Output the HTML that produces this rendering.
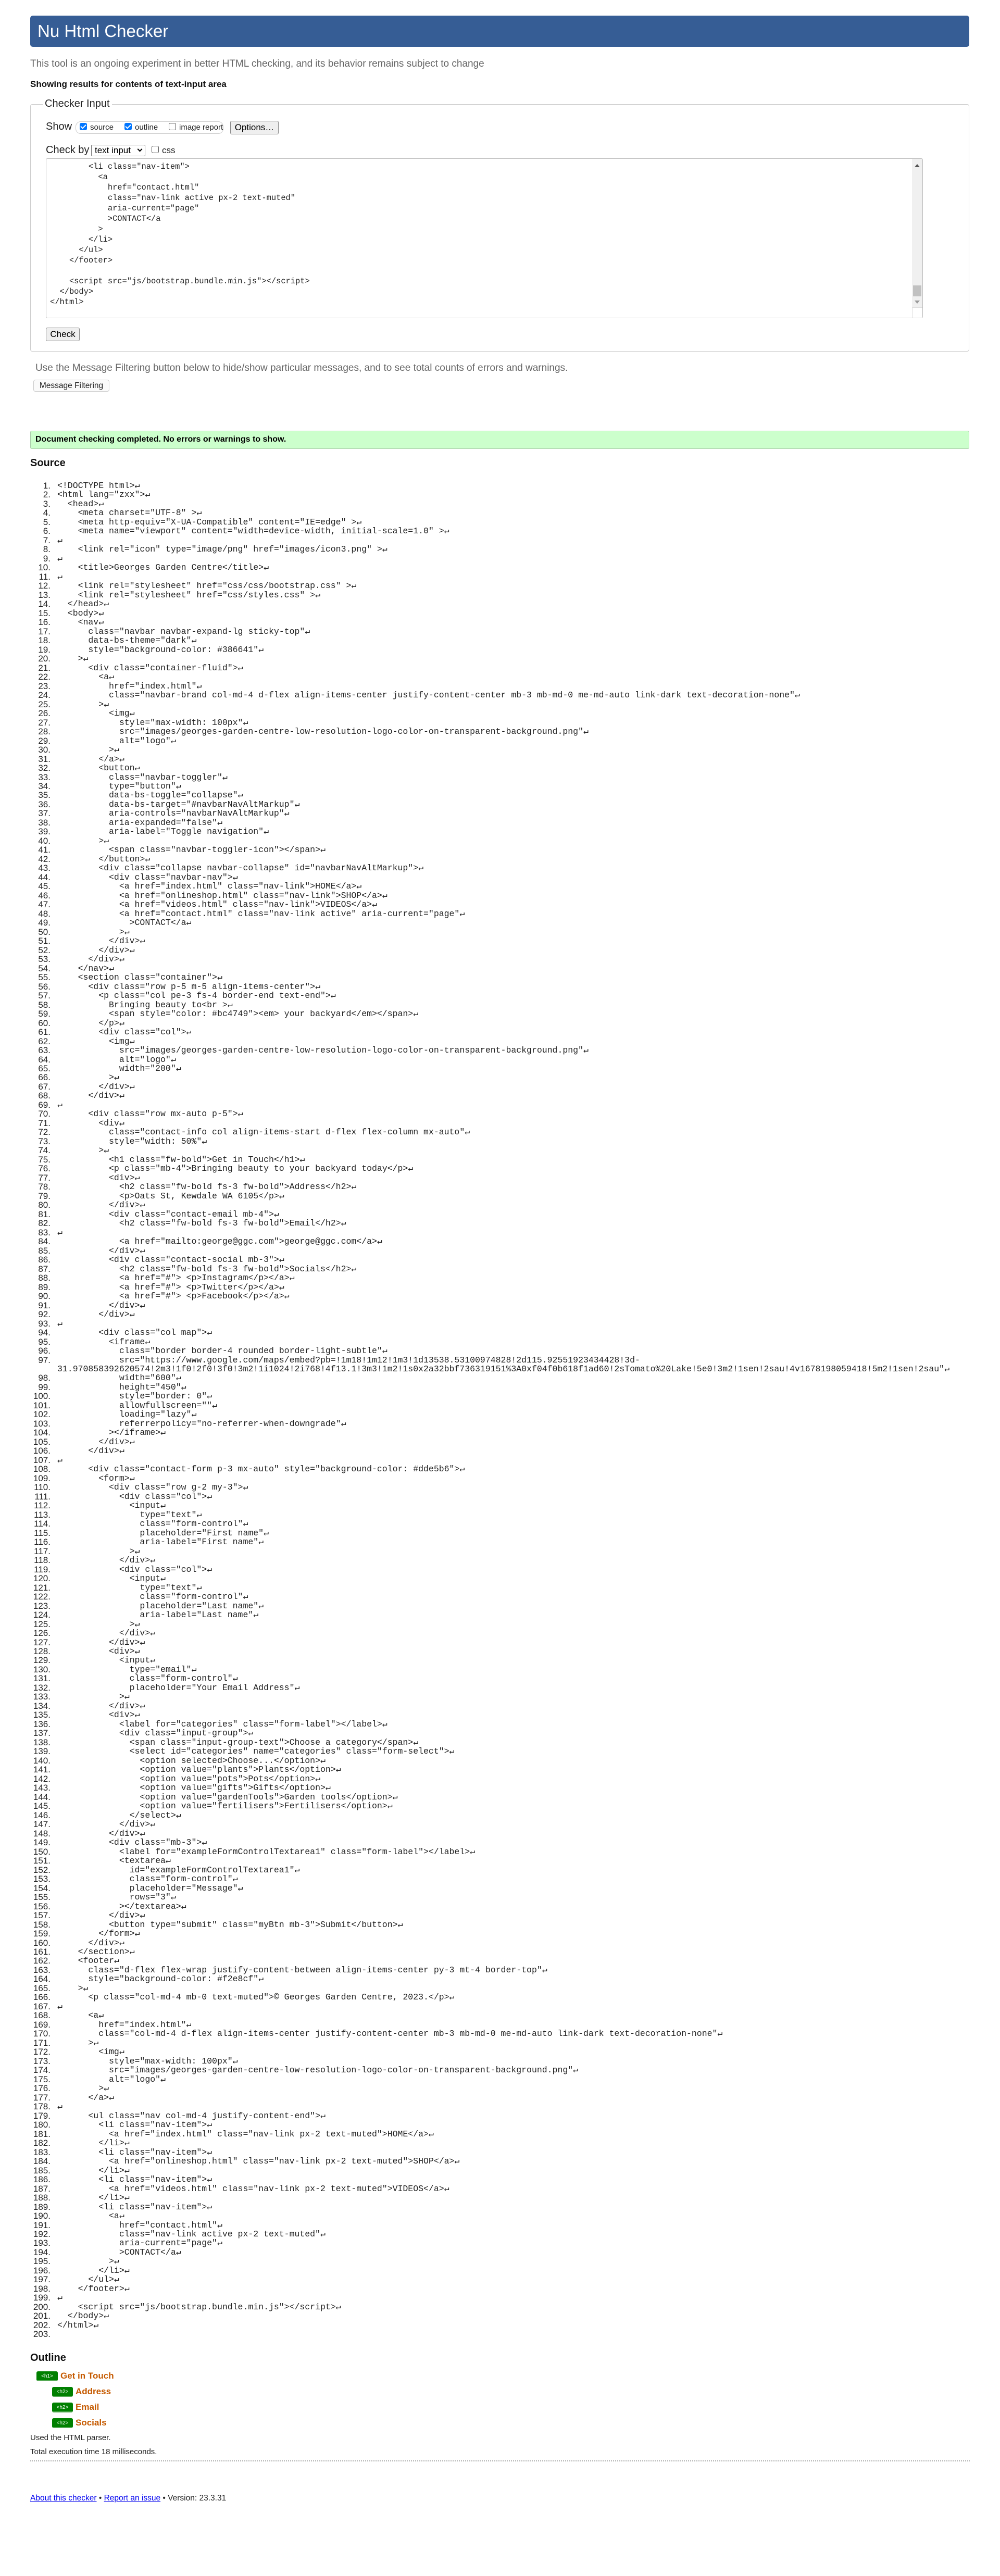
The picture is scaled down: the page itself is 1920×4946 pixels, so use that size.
<!DOCTYPE html>
<html><head><meta charset="utf-8"><title>Nu Html Checker</title>
<style>
*{box-sizing:border-box;margin:0;padding:0}
html,body{width:1920px;height:4946px;background:#fff;overflow:hidden}
body{position:relative;font-family:"Liberation Sans",Arial,sans-serif;color:#222}
.a{position:absolute;white-space:nowrap}
.hdr{left:58px;top:30px;width:1803px;height:60px;background:#365d95;border-radius:5px}
.hdr span{position:absolute;left:14px;top:10px;font-size:33px;color:#fff;line-height:40px}
.cb{position:absolute;width:14px;height:14px;border-radius:3px}
.cb.on{background:#0075ff}
.cb.on::after{content:"";position:absolute;left:4px;top:1px;width:4px;height:8px;border:solid #fff;border-width:0 2px 2px 0;transform:rotate(45deg)}
.cb.off{border:1px solid #555;background:#fff}
.btn{position:absolute;background:#efefef;border:1px solid #8a8a8a;border-radius:3px;font-size:17px;text-align:center;color:#000}
ol{position:absolute;left:0;top:924px;list-style:none;counter-reset:n;width:1900px}
ol li{position:relative;margin-left:110px;height:auto;font-family:"Liberation Mono","DejaVu Sans Mono",monospace;font-size:16.5px;line-height:17.48px;white-space:pre;color:#222;counter-increment:n}
ol li::before{content:counter(n) ".";position:absolute;right:100%;margin-right:13px;font-family:"Liberation Sans",Arial,sans-serif;font-size:17px;color:#222}
.ta{left:88px;top:304px;width:1684px;height:307px;border:1px solid #bbb;border-radius:3px;overflow:hidden}
.ta pre{position:absolute;left:7px;top:5px;font-family:"Liberation Mono","DejaVu Sans Mono",monospace;font-size:15.4px;line-height:20px;color:#222}
.badge{position:absolute;height:19px;background:#008000;color:#fff;font-size:10px;line-height:19px;text-align:center;border-radius:3px;border-bottom:2px solid #5a5}
.ol{position:absolute;font-size:17px;font-weight:bold;color:#c55a00;white-space:nowrap}
</style></head><body>
<div class="a hdr"><span>Nu Html Checker</span></div>
<div class="a" style="left:58px;top:111px;font-size:19px;line-height:24px;color:#666">This tool is an ongoing experiment in better HTML checking, and its behavior remains subject to change</div>
<div class="a" style="left:58px;top:151px;font-size:17px;line-height:22px;font-weight:bold;color:#111">Showing results for contents of text-input area</div>

<div class="a" style="left:58px;top:200px;width:1803px;height:475px;border:1px solid #ccc;border-radius:4px"></div>
<div class="a" style="left:82px;top:187px;font-size:20px;line-height:24px;background:#fff;padding:0 4px;color:#222">Checker Input</div>
<div class="a" style="left:88px;top:231px;font-size:20px;line-height:24px">Show</div>
<div class="a" style="left:145px;top:233px;width:284px;height:24px;border:1px solid #ccc;border-radius:10px"></div>
<div class="cb on" style="left:153px;top:236px"></div>
<div class="a" style="left:173px;top:236px;font-size:15px;line-height:18px">source</div>
<div class="cb on" style="left:239px;top:236px"></div>
<div class="a" style="left:259px;top:236px;font-size:15px;line-height:18px">outline</div>
<div class="cb off" style="left:324px;top:236px"></div>
<div class="a" style="left:344px;top:236px;font-size:15px;line-height:18px">image report</div>
<div class="btn" style="left:442px;top:232px;width:93px;height:26px;line-height:23px">Options…</div>
<div class="a" style="left:88px;top:276px;font-size:20px;line-height:24px">Check by</div>
<div class="a" style="left:175px;top:278px;width:104px;height:22px;border:1px solid #767676;border-radius:2px;font-size:17px;line-height:20px;padding-left:6px;color:#000">text input<span style="position:absolute;right:6px;top:4px;width:7px;height:7px;border:solid #000;border-width:0 2px 2px 0;transform:rotate(45deg)"></span></div>
<div class="cb off" style="left:291px;top:280px"></div>
<div class="a" style="left:311px;top:278px;font-size:17px;line-height:22px">css</div>
<div class="a ta"><pre>        &lt;li class="nav-item"&gt;
          &lt;a
            href="contact.html"
            class="nav-link active px-2 text-muted"
            aria-current="page"
            &gt;CONTACT&lt;/a
          &gt;
        &lt;/li&gt;
      &lt;/ul&gt;
    &lt;/footer&gt;

    &lt;script src="js/bootstrap.bundle.min.js"&gt;&lt;/script&gt;
  &lt;/body&gt;
&lt;/html&gt;</pre>
<div style="position:absolute;right:0;top:0;width:20px;height:100%;background:#f0f0f0"></div>
<div style="position:absolute;right:5px;top:10px;width:0;height:0;border:5px solid transparent;border-bottom:6px solid #555;border-top:0"></div>
<div style="position:absolute;right:2px;top:243px;width:16px;height:21px;background:#c1c1c1"></div>
<div style="position:absolute;right:5px;top:272px;width:0;height:0;border:5px solid transparent;border-top:6px solid #999;border-bottom:0"></div>
<div style="position:absolute;right:0;bottom:0;width:20px;height:20px;background:#fff;border-left:1px solid #ddd;border-top:1px solid #ddd"></div>
</div>
<div class="btn" style="left:88px;top:629px;width:65px;height:26px;line-height:23px">Check</div>

<div class="a" style="left:68px;top:695px;font-size:19px;line-height:24px;color:#666">Use the Message Filtering button below to hide/show particular messages, and to see total counts of errors and warnings.</div>
<div class="a" style="left:64px;top:729px;width:146px;height:23px;border:1px solid #ccc;border-radius:4px;font-size:15.5px;line-height:21px;text-align:center;background:#fafafa">Message Filtering</div>

<div class="a" style="left:58px;top:827px;width:1803px;height:35px;background:#ccffcc;border:1px solid #aaccaa;border-radius:3px"></div>
<div class="a" style="left:68px;top:834px;font-size:16px;line-height:20px;font-weight:bold;color:#000">Document checking completed. No errors or warnings to show.</div>
<div class="a" style="left:58px;top:877px;font-size:20px;line-height:24px;font-weight:bold;color:#111">Source</div>

<ol>
<li>&lt;!DOCTYPE html&gt;↵</li>
<li>&lt;html lang="zxx"&gt;↵</li>
<li>  &lt;head&gt;↵</li>
<li>    &lt;meta charset="UTF-8" &gt;↵</li>
<li>    &lt;meta http-equiv="X-UA-Compatible" content="IE=edge" &gt;↵</li>
<li>    &lt;meta name="viewport" content="width=device-width, initial-scale=1.0" &gt;↵</li>
<li>↵</li>
<li>    &lt;link rel="icon" type="image/png" href="images/icon3.png" &gt;↵</li>
<li>↵</li>
<li>    &lt;title&gt;Georges Garden Centre&lt;/title&gt;↵</li>
<li>↵</li>
<li>    &lt;link rel="stylesheet" href="css/css/bootstrap.css" &gt;↵</li>
<li>    &lt;link rel="stylesheet" href="css/styles.css" &gt;↵</li>
<li>  &lt;/head&gt;↵</li>
<li>  &lt;body&gt;↵</li>
<li>    &lt;nav↵</li>
<li>      class="navbar navbar-expand-lg sticky-top"↵</li>
<li>      data-bs-theme="dark"↵</li>
<li>      style="background-color: #386641"↵</li>
<li>    &gt;↵</li>
<li>      &lt;div class="container-fluid"&gt;↵</li>
<li>        &lt;a↵</li>
<li>          href="index.html"↵</li>
<li>          class="navbar-brand col-md-4 d-flex align-items-center justify-content-center mb-3 mb-md-0 me-md-auto link-dark text-decoration-none"↵</li>
<li>        &gt;↵</li>
<li>          &lt;img↵</li>
<li>            style="max-width: 100px"↵</li>
<li>            src="images/georges-garden-centre-low-resolution-logo-color-on-transparent-background.png"↵</li>
<li>            alt="logo"↵</li>
<li>          &gt;↵</li>
<li>        &lt;/a&gt;↵</li>
<li>        &lt;button↵</li>
<li>          class="navbar-toggler"↵</li>
<li>          type="button"↵</li>
<li>          data-bs-toggle="collapse"↵</li>
<li>          data-bs-target="#navbarNavAltMarkup"↵</li>
<li>          aria-controls="navbarNavAltMarkup"↵</li>
<li>          aria-expanded="false"↵</li>
<li>          aria-label="Toggle navigation"↵</li>
<li>        &gt;↵</li>
<li>          &lt;span class="navbar-toggler-icon"&gt;&lt;/span&gt;↵</li>
<li>        &lt;/button&gt;↵</li>
<li>        &lt;div class="collapse navbar-collapse" id="navbarNavAltMarkup"&gt;↵</li>
<li>          &lt;div class="navbar-nav"&gt;↵</li>
<li>            &lt;a href="index.html" class="nav-link"&gt;HOME&lt;/a&gt;↵</li>
<li>            &lt;a href="onlineshop.html" class="nav-link"&gt;SHOP&lt;/a&gt;↵</li>
<li>            &lt;a href="videos.html" class="nav-link"&gt;VIDEOS&lt;/a&gt;↵</li>
<li>            &lt;a href="contact.html" class="nav-link active" aria-current="page"↵</li>
<li>              &gt;CONTACT&lt;/a↵</li>
<li>            &gt;↵</li>
<li>          &lt;/div&gt;↵</li>
<li>        &lt;/div&gt;↵</li>
<li>      &lt;/div&gt;↵</li>
<li>    &lt;/nav&gt;↵</li>
<li>    &lt;section class="container"&gt;↵</li>
<li>      &lt;div class="row p-5 m-5 align-items-center"&gt;↵</li>
<li>        &lt;p class="col pe-3 fs-4 border-end text-end"&gt;↵</li>
<li>          Bringing beauty to&lt;br &gt;↵</li>
<li>          &lt;span style="color: #bc4749"&gt;&lt;em&gt; your backyard&lt;/em&gt;&lt;/span&gt;↵</li>
<li>        &lt;/p&gt;↵</li>
<li>        &lt;div class="col"&gt;↵</li>
<li>          &lt;img↵</li>
<li>            src="images/georges-garden-centre-low-resolution-logo-color-on-transparent-background.png"↵</li>
<li>            alt="logo"↵</li>
<li>            width="200"↵</li>
<li>          &gt;↵</li>
<li>        &lt;/div&gt;↵</li>
<li>      &lt;/div&gt;↵</li>
<li>↵</li>
<li>      &lt;div class="row mx-auto p-5"&gt;↵</li>
<li>        &lt;div↵</li>
<li>          class="contact-info col align-items-start d-flex flex-column mx-auto"↵</li>
<li>          style="width: 50%"↵</li>
<li>        &gt;↵</li>
<li>          &lt;h1 class="fw-bold"&gt;Get in Touch&lt;/h1&gt;↵</li>
<li>          &lt;p class="mb-4"&gt;Bringing beauty to your backyard today&lt;/p&gt;↵</li>
<li>          &lt;div&gt;↵</li>
<li>            &lt;h2 class="fw-bold fs-3 fw-bold"&gt;Address&lt;/h2&gt;↵</li>
<li>            &lt;p&gt;Oats St, Kewdale WA 6105&lt;/p&gt;↵</li>
<li>          &lt;/div&gt;↵</li>
<li>          &lt;div class="contact-email mb-4"&gt;↵</li>
<li>            &lt;h2 class="fw-bold fs-3 fw-bold"&gt;Email&lt;/h2&gt;↵</li>
<li>↵</li>
<li>            &lt;a href="mailto:george@ggc.com"&gt;george@ggc.com&lt;/a&gt;↵</li>
<li>          &lt;/div&gt;↵</li>
<li>          &lt;div class="contact-social mb-3"&gt;↵</li>
<li>            &lt;h2 class="fw-bold fs-3 fw-bold"&gt;Socials&lt;/h2&gt;↵</li>
<li>            &lt;a href="#"&gt; &lt;p&gt;Instagram&lt;/p&gt;&lt;/a&gt;↵</li>
<li>            &lt;a href="#"&gt; &lt;p&gt;Twitter&lt;/p&gt;&lt;/a&gt;↵</li>
<li>            &lt;a href="#"&gt; &lt;p&gt;Facebook&lt;/p&gt;&lt;/a&gt;↵</li>
<li>          &lt;/div&gt;↵</li>
<li>        &lt;/div&gt;↵</li>
<li>↵</li>
<li>        &lt;div class="col map"&gt;↵</li>
<li>          &lt;iframe↵</li>
<li>            class="border border-4 rounded border-light-subtle"↵</li>
<li>            src="https://www.google.com/maps/embed?pb=!1m18!1m12!1m3!1d13538.53100974828!2d115.92551923434428!3d-
31.970858392620574!2m3!1f0!2f0!3f0!3m2!1i1024!2i768!4f13.1!3m3!1m2!1s0x2a32bbf736319151%3A0xf04f0b618f1ad60!2sTomato%20Lake!5e0!3m2!1sen!2sau!4v1678198059418!5m2!1sen!2sau"↵</li>
<li>            width="600"↵</li>
<li>            height="450"↵</li>
<li>            style="border: 0"↵</li>
<li>            allowfullscreen=""↵</li>
<li>            loading="lazy"↵</li>
<li>            referrerpolicy="no-referrer-when-downgrade"↵</li>
<li>          &gt;&lt;/iframe&gt;↵</li>
<li>        &lt;/div&gt;↵</li>
<li>      &lt;/div&gt;↵</li>
<li>↵</li>
<li>      &lt;div class="contact-form p-3 mx-auto" style="background-color: #dde5b6"&gt;↵</li>
<li>        &lt;form&gt;↵</li>
<li>          &lt;div class="row g-2 my-3"&gt;↵</li>
<li>            &lt;div class="col"&gt;↵</li>
<li>              &lt;input↵</li>
<li>                type="text"↵</li>
<li>                class="form-control"↵</li>
<li>                placeholder="First name"↵</li>
<li>                aria-label="First name"↵</li>
<li>              &gt;↵</li>
<li>            &lt;/div&gt;↵</li>
<li>            &lt;div class="col"&gt;↵</li>
<li>              &lt;input↵</li>
<li>                type="text"↵</li>
<li>                class="form-control"↵</li>
<li>                placeholder="Last name"↵</li>
<li>                aria-label="Last name"↵</li>
<li>              &gt;↵</li>
<li>            &lt;/div&gt;↵</li>
<li>          &lt;/div&gt;↵</li>
<li>          &lt;div&gt;↵</li>
<li>            &lt;input↵</li>
<li>              type="email"↵</li>
<li>              class="form-control"↵</li>
<li>              placeholder="Your Email Address"↵</li>
<li>            &gt;↵</li>
<li>          &lt;/div&gt;↵</li>
<li>          &lt;div&gt;↵</li>
<li>            &lt;label for="categories" class="form-label"&gt;&lt;/label&gt;↵</li>
<li>            &lt;div class="input-group"&gt;↵</li>
<li>              &lt;span class="input-group-text"&gt;Choose a category&lt;/span&gt;↵</li>
<li>              &lt;select id="categories" name="categories" class="form-select"&gt;↵</li>
<li>                &lt;option selected&gt;Choose...&lt;/option&gt;↵</li>
<li>                &lt;option value="plants"&gt;Plants&lt;/option&gt;↵</li>
<li>                &lt;option value="pots"&gt;Pots&lt;/option&gt;↵</li>
<li>                &lt;option value="gifts"&gt;Gifts&lt;/option&gt;↵</li>
<li>                &lt;option value="gardenTools"&gt;Garden tools&lt;/option&gt;↵</li>
<li>                &lt;option value="fertilisers"&gt;Fertilisers&lt;/option&gt;↵</li>
<li>              &lt;/select&gt;↵</li>
<li>            &lt;/div&gt;↵</li>
<li>          &lt;/div&gt;↵</li>
<li>          &lt;div class="mb-3"&gt;↵</li>
<li>            &lt;label for="exampleFormControlTextarea1" class="form-label"&gt;&lt;/label&gt;↵</li>
<li>            &lt;textarea↵</li>
<li>              id="exampleFormControlTextarea1"↵</li>
<li>              class="form-control"↵</li>
<li>              placeholder="Message"↵</li>
<li>              rows="3"↵</li>
<li>            &gt;&lt;/textarea&gt;↵</li>
<li>          &lt;/div&gt;↵</li>
<li>          &lt;button type="submit" class="myBtn mb-3"&gt;Submit&lt;/button&gt;↵</li>
<li>        &lt;/form&gt;↵</li>
<li>      &lt;/div&gt;↵</li>
<li>    &lt;/section&gt;↵</li>
<li>    &lt;footer↵</li>
<li>      class="d-flex flex-wrap justify-content-between align-items-center py-3 mt-4 border-top"↵</li>
<li>      style="background-color: #f2e8cf"↵</li>
<li>    &gt;↵</li>
<li>      &lt;p class="col-md-4 mb-0 text-muted"&gt;© Georges Garden Centre, 2023.&lt;/p&gt;↵</li>
<li>↵</li>
<li>      &lt;a↵</li>
<li>        href="index.html"↵</li>
<li>        class="col-md-4 d-flex align-items-center justify-content-center mb-3 mb-md-0 me-md-auto link-dark text-decoration-none"↵</li>
<li>      &gt;↵</li>
<li>        &lt;img↵</li>
<li>          style="max-width: 100px"↵</li>
<li>          src="images/georges-garden-centre-low-resolution-logo-color-on-transparent-background.png"↵</li>
<li>          alt="logo"↵</li>
<li>        &gt;↵</li>
<li>      &lt;/a&gt;↵</li>
<li>↵</li>
<li>      &lt;ul class="nav col-md-4 justify-content-end"&gt;↵</li>
<li>        &lt;li class="nav-item"&gt;↵</li>
<li>          &lt;a href="index.html" class="nav-link px-2 text-muted"&gt;HOME&lt;/a&gt;↵</li>
<li>        &lt;/li&gt;↵</li>
<li>        &lt;li class="nav-item"&gt;↵</li>
<li>          &lt;a href="onlineshop.html" class="nav-link px-2 text-muted"&gt;SHOP&lt;/a&gt;↵</li>
<li>        &lt;/li&gt;↵</li>
<li>        &lt;li class="nav-item"&gt;↵</li>
<li>          &lt;a href="videos.html" class="nav-link px-2 text-muted"&gt;VIDEOS&lt;/a&gt;↵</li>
<li>        &lt;/li&gt;↵</li>
<li>        &lt;li class="nav-item"&gt;↵</li>
<li>          &lt;a↵</li>
<li>            href="contact.html"↵</li>
<li>            class="nav-link active px-2 text-muted"↵</li>
<li>            aria-current="page"↵</li>
<li>            &gt;CONTACT&lt;/a↵</li>
<li>          &gt;↵</li>
<li>        &lt;/li&gt;↵</li>
<li>      &lt;/ul&gt;↵</li>
<li>    &lt;/footer&gt;↵</li>
<li>↵</li>
<li>    &lt;script src="js/bootstrap.bundle.min.js"&gt;&lt;/script&gt;↵</li>
<li>  &lt;/body&gt;↵</li>
<li>&lt;/html&gt;↵</li>
<li> </li>
</ol>

<div class="a" style="left:58px;top:4515px;font-size:20px;line-height:24px;font-weight:bold;color:#111">Outline</div>
<div class="badge" style="left:70px;top:4553px;width:41px">&lt;h1&gt;</div>
<div class="ol" style="left:116px;top:4551px;line-height:22px">Get in Touch</div>
<div class="badge" style="left:100px;top:4583px;width:40px">&lt;h2&gt;</div>
<div class="ol" style="left:145px;top:4581px;line-height:22px">Address</div>
<div class="badge" style="left:100px;top:4613px;width:40px">&lt;h2&gt;</div>
<div class="ol" style="left:145px;top:4611px;line-height:22px">Email</div>
<div class="badge" style="left:100px;top:4643px;width:40px">&lt;h2&gt;</div>
<div class="ol" style="left:145px;top:4641px;line-height:22px">Socials</div>
<div class="a" style="left:58px;top:4672px;font-size:15px;line-height:18px;color:#222">Used the HTML parser.</div>
<div class="a" style="left:58px;top:4699px;font-size:15px;line-height:18px;color:#222">Total execution time 18 milliseconds.</div>
<div class="a" style="left:58px;top:4724px;width:1804px;border-top:2px dotted #aaa"></div>
<div class="a" style="left:58px;top:4787px;font-size:15.5px;line-height:20px;color:#222"><span style="color:#00e;text-decoration:underline">About this checker</span> • <span style="color:#00e;text-decoration:underline">Report an issue</span> • Version: 23.3.31</div>
</body></html>
